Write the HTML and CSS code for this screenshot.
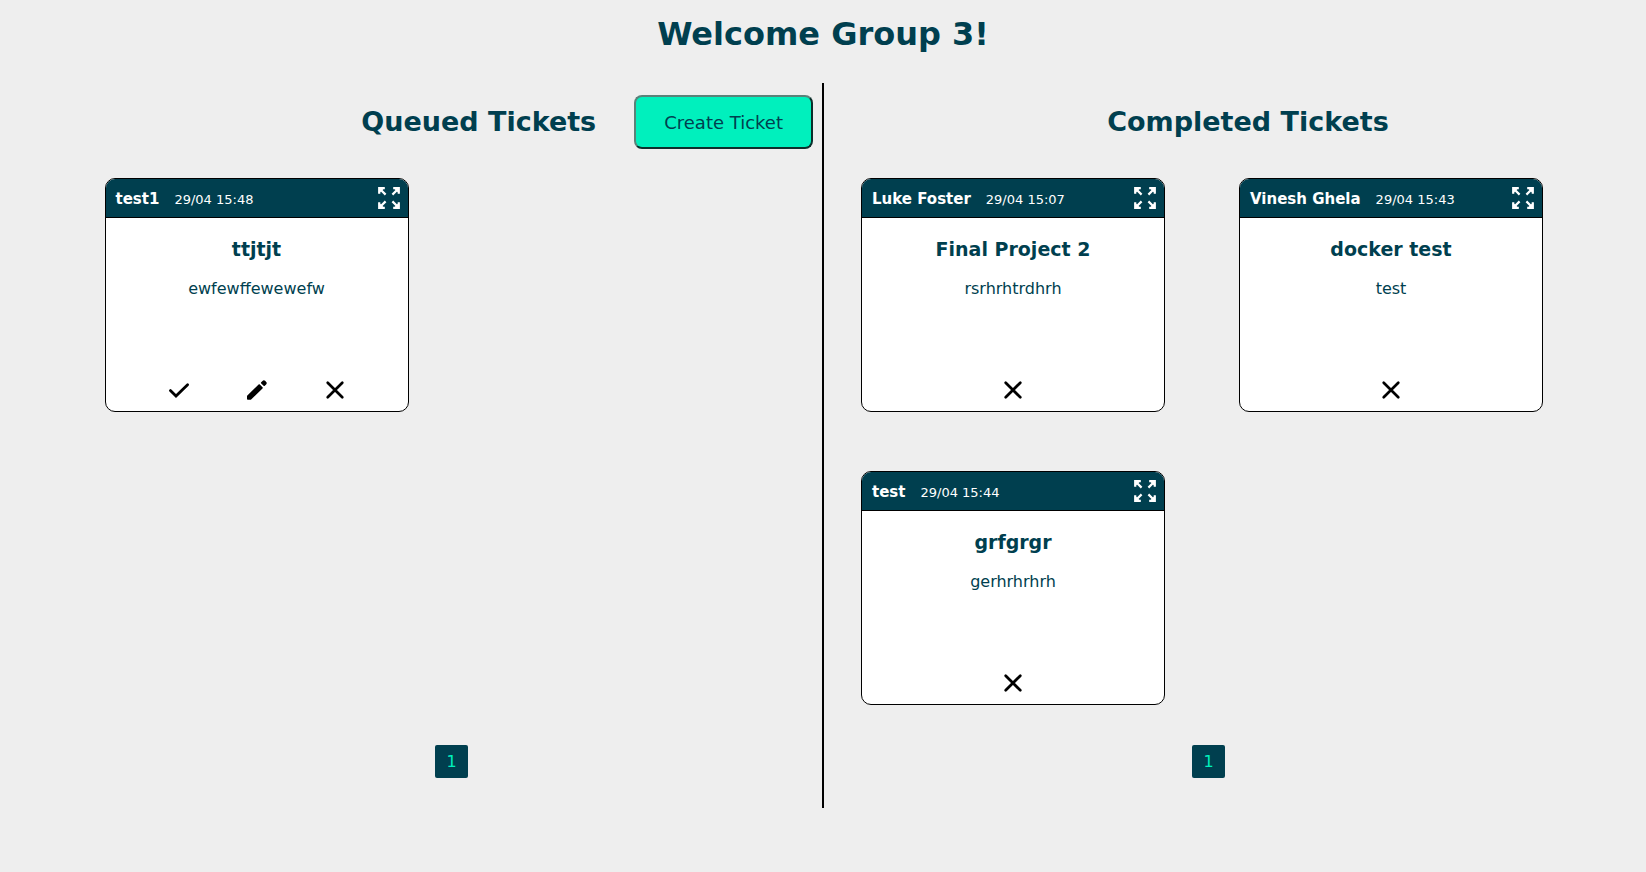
FILE: index.html
```html
<!DOCTYPE html>
<html lang="en">
<head>
<meta charset="utf-8">
<meta name="viewport" content="width=device-width, initial-scale=1">
<title>Tickets</title>
<link rel="stylesheet" href="styles.css">
</head>
<body>
<svg class="sprite" aria-hidden="true">
  <symbol id="expand" viewBox="0 0 22 22">
    <g fill="none" stroke="currentColor" stroke-width="2.2">
      <path d="M1.2 6.8V1.2H6.8M1.2 1.2L7.6 7.6"/>
      <path d="M15.2 1.2H20.8V6.8M20.8 1.2L14.4 7.6"/>
      <path d="M1.2 15.2V20.8H6.8M1.2 20.8L7.6 14.4"/>
      <path d="M15.2 20.8H20.8V15.2M20.8 20.8L14.4 14.4"/>
    </g>
    <path fill="currentColor" d="M1 1H6.5L1 6.5ZM21 1V6.5L15.5 1ZM1 21V15.5L6.5 21ZM21 21H15.5L21 15.5Z"/>
  </symbol>
  <symbol id="check" viewBox="0 0 24 24">
    <path d="M3.4 12.6L9 18L20.6 6.8" fill="none" stroke="currentColor" stroke-width="2.8" stroke-linecap="round"/>
  </symbol>
  <symbol id="pencil" viewBox="0 0 24 24">
    <path fill="currentColor" d="M2.3 17.6L13.6 6.5C14 6.1 14.4 6.1 14.8 6.5L17.5 9.2C17.9 9.6 17.9 10 17.5 10.4L6.4 21.3C6 21.7 5.6 21.8 5.2 21.8H2.8C2.3 21.8 2 21.5 2 21V18.5C2 18.1 2 17.9 2.3 17.6ZM16.2 4.2L17.5 2.9C18.3 2.1 19.3 2 20.1 2.8L21.2 3.9C22 4.7 21.9 5.7 21.1 6.5L19.8 7.8C19.4 8.2 19 8.2 18.6 7.8L16.2 5.4C15.8 5 15.8 4.6 16.2 4.2Z"/>
  </symbol>
  <symbol id="cross" viewBox="0 0 24 24">
    <path d="M4.7 4.7L19.3 19.3M19.3 4.7L4.7 19.3" fill="none" stroke="currentColor" stroke-width="2.7" stroke-linecap="round"/>
  </symbol>
</svg>

<h1 class="welcome">Welcome Group 3!</h1>

<main class="board">
  <section class="column column-queued">
    <header class="column-head">
      <h2 class="column-title">Queued Tickets</h2>
      <button class="create" type="button">Create Ticket</button>
    </header>
    <div class="tickets">
      <article class="ticket">
        <header class="ticket-head">
          <span class="author">test1</span>
          <time class="date">29/04 15:48</time>
          <button class="icon-button expand" type="button" aria-label="Expand"><svg class="icon-expand"><use href="#expand"/></svg></button>
        </header>
        <h3 class="ticket-title">ttjtjt</h3>
        <p class="ticket-text">ewfewffewewefw</p>
        <footer class="actions">
          <button class="icon-button" type="button" aria-label="Complete"><svg class="icon"><use href="#check"/></svg></button>
          <button class="icon-button" type="button" aria-label="Edit"><svg class="icon"><use href="#pencil"/></svg></button>
          <button class="icon-button" type="button" aria-label="Delete"><svg class="icon"><use href="#cross"/></svg></button>
        </footer>
      </article>
    </div>
    <nav class="pager" aria-label="Queued pages"><a class="page" href="#">1</a></nav>
  </section>

  <section class="column column-completed">
    <header class="column-head">
      <h2 class="column-title">Completed Tickets</h2>
    </header>
    <div class="tickets">
      <article class="ticket">
        <header class="ticket-head">
          <span class="author">Luke Foster</span>
          <time class="date">29/04 15:07</time>
          <button class="icon-button expand" type="button" aria-label="Expand"><svg class="icon-expand"><use href="#expand"/></svg></button>
        </header>
        <h3 class="ticket-title">Final Project 2</h3>
        <p class="ticket-text">rsrhrhtrdhrh</p>
        <footer class="actions">
          <button class="icon-button" type="button" aria-label="Delete"><svg class="icon"><use href="#cross"/></svg></button>
        </footer>
      </article>
      <article class="ticket">
        <header class="ticket-head">
          <span class="author">Vinesh Ghela</span>
          <time class="date">29/04 15:43</time>
          <button class="icon-button expand" type="button" aria-label="Expand"><svg class="icon-expand"><use href="#expand"/></svg></button>
        </header>
        <h3 class="ticket-title">docker test</h3>
        <p class="ticket-text">test</p>
        <footer class="actions">
          <button class="icon-button" type="button" aria-label="Delete"><svg class="icon"><use href="#cross"/></svg></button>
        </footer>
      </article>
      <article class="ticket">
        <header class="ticket-head">
          <span class="author">test</span>
          <time class="date">29/04 15:44</time>
          <button class="icon-button expand" type="button" aria-label="Expand"><svg class="icon-expand"><use href="#expand"/></svg></button>
        </header>
        <h3 class="ticket-title">grfgrgr</h3>
        <p class="ticket-text">gerhrhrhrh</p>
        <footer class="actions">
          <button class="icon-button" type="button" aria-label="Delete"><svg class="icon"><use href="#cross"/></svg></button>
        </footer>
      </article>
    </div>
    <nav class="pager" aria-label="Completed pages"><a class="page" href="#">1</a></nav>
  </section>
</main>
</body>
</html>
```

FILE: styles.css
```css
* {
  box-sizing: border-box;
}

body {
  margin: 0;
  background: #eeeeee;
  color: #003f4f;
  font-family: Verdana, "DejaVu Sans", sans-serif;
  font-size: 16px;
}

h1, h2, h3, p {
  margin: 0;
}

button {
  font-family: inherit;
}

.sprite {
  position: absolute;
  width: 0;
  height: 0;
}

.welcome {
  padding: 14px 0 29px;
  font-size: 32px;
  line-height: 40px;
  text-align: center;
}

.board {
  display: grid;
  grid-template-columns: 1fr 1fr;
  padding: 0 66px 0 68px;
}

.column {
  display: flex;
  flex-direction: column;
  padding-bottom: 30px;
}

.column-queued {
  border-right: 2px solid #000000;
}

.column-head {
  display: flex;
  align-items: center;
  gap: 38px;
  min-height: 78px;
}

.column-queued .column-head {
  justify-content: flex-end;
  padding-right: 9px;
}

.column-completed .column-head {
  justify-content: center;
  padding-left: 92px;
}

.column-title {
  font-size: 27px;
  line-height: 32px;
}

.create {
  padding: 15px 28px 13px;
  border: 2px solid;
  border-color: #5a8279 #0c2f2b #0c2f2b #5a8279;
  border-radius: 8px;
  background: #00f0bd;
  color: #003f4f;
  font-size: 18px;
  line-height: 22px;
}

.tickets {
  display: grid;
  grid-template-columns: 1fr 1fr;
  justify-items: center;
  align-content: start;
  row-gap: 59px;
  flex: 1;
  padding: 17px 0 40px;
}

.ticket {
  display: flex;
  flex-direction: column;
  width: 304px;
  min-height: 234px;
  border: 1px solid #000000;
  border-radius: 10px;
  overflow: hidden;
  background: #ffffff;
  text-align: center;
}

.ticket-head {
  display: flex;
  align-items: center;
  gap: 15px;
  height: 39px;
  padding: 0 8px 0 10px;
  border-bottom: 1px solid #000000;
  background: #003f4f;
  color: #ffffff;
}

.author {
  padding-top: 1px;
  font-size: 15px;
  font-weight: bold;
}

.date {
  padding-top: 2px;
  font-size: 13px;
}

.icon-button {
  display: flex;
  padding: 0;
  border: 0;
  background: none;
  color: #000000;
}

.expand {
  margin-left: auto;
  color: #ffffff;
}

.icon-expand {
  width: 22px;
  height: 22px;
}

.icon {
  width: 24px;
  height: 24px;
}

.ticket-title {
  padding-top: 18px;
  font-size: 19px;
  line-height: 26px;
}

.ticket-text {
  padding-top: 17px;
  line-height: 20px;
}

.actions {
  display: flex;
  justify-content: center;
  gap: 54px;
  margin-top: auto;
  padding-bottom: 9px;
}

.pager {
  display: flex;
  justify-content: center;
  padding-left: 13px;
}

.page {
  min-width: 33px;
  padding: 6px 0 5px;
  border-radius: 2px;
  background: #003f4f;
  color: #00f0bd;
  line-height: 22px;
  text-align: center;
  text-decoration: none;
}
```
